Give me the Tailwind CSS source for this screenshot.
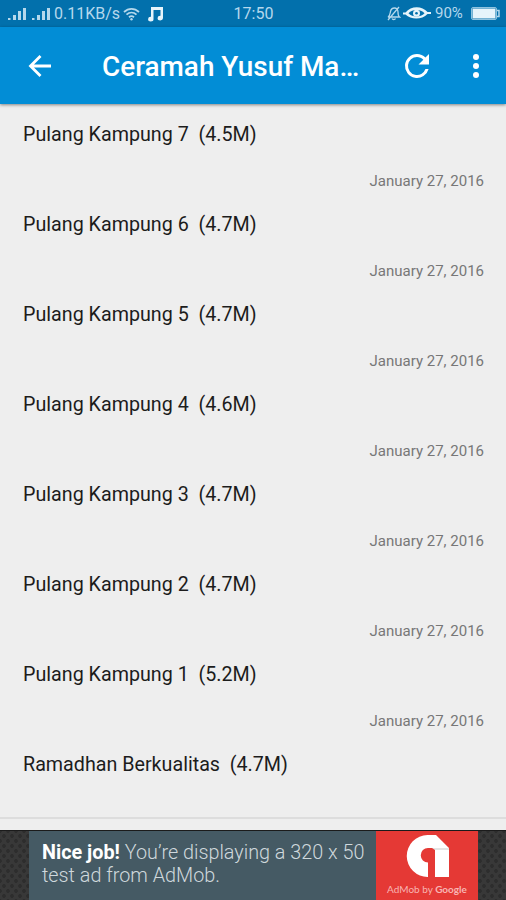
<!DOCTYPE html>
<html lang="id">
<head>
  <meta charset="UTF-8" />
  <title>Ceramah Yusuf Mansur</title>
  <meta name="viewport" content="width=device-width, initial-scale=1.0" />
  <script src="https://cdn.jsdelivr.net/npm/@tailwindcss/browser@4"></script>
</head>
<body class="h-[900px] w-[506px] flex flex-col overflow-hidden bg-[#eeeeee] font-['Roboto',sans-serif]">
  <!-- Status Bar -->
  <div class="h-[27px] shrink-0 grid grid-cols-[1fr_auto_1fr] items-center bg-[#0270ac] pl-[7px] pr-[6px] text-[#b5d8ec]">
    <div class="flex items-center">
      <svg class="w-[20px] h-[14px] shrink-0" viewBox="0 0 20 14" fill="currentColor">
        <path d="M1 11h2.500v2H1zM6 8h3v5H6zM11 4h3v9h-3zM16 1h3v12h-3z"/>
      </svg>
      <svg class="ml-[4px] w-[20px] h-[14px] shrink-0" viewBox="0 0 20 14" fill="currentColor">
        <path d="M1 11h2.500v2H1zM6 8h3v5H6zM11 4h3v9h-3zM16 1h3v12h-3z"/>
      </svg>
      <span class="ml-[3px] mt-[1px] w-[66px] text-[16px] leading-none whitespace-nowrap">0.11KB/s</span>
      <svg class="ml-[3px] w-[17px] h-[14px] shrink-0" viewBox="0 0 17 14" fill="none" stroke="currentColor" stroke-width="1.800">
        <path d="M1 5c4.500-4.300 10.500-4.300 15 0M3.500 7.700c3-2.900 7-2.900 10 0M6 10.200c1.600-1.400 3.400-1.400 5 0"/>
        <circle cx="8.500" cy="12.300" r="1.200" fill="currentColor" stroke="none"/>
      </svg>
      <svg class="ml-[7px] w-[16px] h-[16px] shrink-0 text-[#e6f4fb]" viewBox="0 0 16 16" fill="currentColor">
        <path d="M4 1h12v11a2.700 2.300 0 1 1-2.500-2.200V4H6.500v9A2.700 2.300 0 1 1 4 10.800z"/>
      </svg>
    </div>
    <span class="text-[16px] leading-none">17:50</span>
    <div class="flex items-center justify-end">
      <svg class="mr-[2px] w-[15px] h-[15px] shrink-0" viewBox="0 0 15 15" fill="none" stroke="currentColor" stroke-width="1.300">
        <path d="M2 11c2-1 2-3 2.500-5.500C5 3 6.500 2 8.500 2S12 4 12 6s0 4 1.500 5zM6 12.500c.5 1.300 3 1.300 3.500 0M13 1L2 14"/>
      </svg>
      <svg class="w-[28px] h-[13px] shrink-0" viewBox="0 0 28 13">
        <path fill="#e6f4fb" d="M0 5.500h2.500C8-1.500 19-1.500 24.500 5h3.500v2h-3.500C19 13 8 13 2.500 7.500H0z"/>
        <path fill="#0270ac" d="M5.500 6.300c4-4.300 12-4.300 16 0-4 4.300-12 4.300-16 0z"/>
        <circle cx="13.500" cy="6.300" r="3.500" fill="#e6f4fb"/>
        <circle cx="13.500" cy="6.300" r="1.300" fill="#0270ac"/>
      </svg>
      <span class="ml-[4px] w-[30px] text-[15px] leading-none">90%</span>
      <svg class="ml-[6px] w-[29px] h-[13px] shrink-0" viewBox="0 0 29 13">
        <rect x=".5" y=".5" width="25" height="12" rx="1.500" fill="none" stroke="#8fc3df"/>
        <path fill="#e6f4fb" d="M1.500 1.500h23v10h-23z"/>
        <path fill="none" stroke="#b5d8ec" stroke-width="1.500" d="M26 3.500h2v6h-2"/>
      </svg>
    </div>
  </div>

  <!-- Toolbar -->
  <header class="relative h-[77px] shrink-0 flex items-center bg-[#028dd6] pl-[26px] pr-[16px] text-white shadow-[0_1px_3px_rgba(0,0,0,0.45)]">
    <svg class="w-[28px] h-[28px]" viewBox="0 0 28 28" fill="none" stroke="currentColor" stroke-width="2.800">
      <path d="M25 14H5M14.500 4L4.500 14l10 10"/>
    </svg>
    <h1 class="ml-[48px] mt-[2px] w-[270px] text-[27.9px] leading-8 font-medium whitespace-nowrap">Ceramah Yusuf Ma…</h1>
    <svg class="ml-[27px] w-[36px] h-[36px] shrink-0" viewBox="0 0 24 24" fill="currentColor">
      <path d="M17.650 6.350A7.958 7.958 0 0 0 12 4a8 8 0 1 0 7.730 10h-2.080A6 6 0 1 1 12 6c1.660 0 3.140.69 4.220 1.780L13 11h7V4z"/>
    </svg>
    <svg class="ml-auto w-[36px] h-[36px] shrink-0 -mr-[4px]" viewBox="0 0 24 24" fill="currentColor">
      <circle cx="12" cy="6" r="2"/><circle cx="12" cy="12" r="2"/><circle cx="12" cy="18" r="2"/>
    </svg>
  </header>

  <!-- Track List -->
  <main class="h-[715px] shrink-0 border-b-2 border-[#dddddd] pt-[15px] pl-[23px] pr-[22px] text-[#1c1c1c]">
    <div class="h-[90px]">
      <p class="text-[19.7px] leading-[31px] whitespace-pre">Pulang Kampung 7  (4.5M)</p>
      <p class="mt-[21px] text-right text-[15px] leading-5 text-[#777777]">January 27, 2016</p>
    </div>
    <div class="h-[90px]">
      <p class="text-[19.7px] leading-[31px] whitespace-pre">Pulang Kampung 6  (4.7M)</p>
      <p class="mt-[21px] text-right text-[15px] leading-5 text-[#777777]">January 27, 2016</p>
    </div>
    <div class="h-[90px]">
      <p class="text-[19.7px] leading-[31px] whitespace-pre">Pulang Kampung 5  (4.7M)</p>
      <p class="mt-[21px] text-right text-[15px] leading-5 text-[#777777]">January 27, 2016</p>
    </div>
    <div class="h-[90px]">
      <p class="text-[19.7px] leading-[31px] whitespace-pre">Pulang Kampung 4  (4.6M)</p>
      <p class="mt-[21px] text-right text-[15px] leading-5 text-[#777777]">January 27, 2016</p>
    </div>
    <div class="h-[90px]">
      <p class="text-[19.7px] leading-[31px] whitespace-pre">Pulang Kampung 3  (4.7M)</p>
      <p class="mt-[21px] text-right text-[15px] leading-5 text-[#777777]">January 27, 2016</p>
    </div>
    <div class="h-[90px]">
      <p class="text-[19.7px] leading-[31px] whitespace-pre">Pulang Kampung 2  (4.7M)</p>
      <p class="mt-[21px] text-right text-[15px] leading-5 text-[#777777]">January 27, 2016</p>
    </div>
    <div class="h-[90px]">
      <p class="text-[19.7px] leading-[31px] whitespace-pre">Pulang Kampung 1  (5.2M)</p>
      <p class="mt-[21px] text-right text-[15px] leading-5 text-[#777777]">January 27, 2016</p>
    </div>
    <p class="text-[19.7px] leading-[31px] whitespace-pre">Ramadhan Berkualitas  (4.7M)</p>
  </main>

  <!-- Ad Banner -->
  <footer class="mt-auto h-[70px] shrink-0 flex border-t border-[#1b1b1b] bg-[#383838] bg-[radial-gradient(#2d2d2d_1.5px,transparent_2px),radial-gradient(#2d2d2d_1.5px,transparent_2px)] bg-[size:8px_10px] bg-[position:0_0,4px_5px]">
    <div class="ml-[29px] w-[347px] bg-[#455a64] pl-[13px] pt-[10px] text-[19.8px] leading-[23px] text-[#cfd8dc]">
      <p class="whitespace-nowrap font-light"><span class="font-bold text-white">Nice job!</span> You’re displaying a 320 x 50</p>
      <p class="whitespace-nowrap font-light">test ad from AdMob.</p>
    </div>
    <div class="w-[102px] flex flex-col items-center bg-[#e53935]">
      <svg class="mt-[4px] w-[43px] h-[42px] shrink-0" viewBox="0 0 43 42">
        <path fill="#ffffff" d="M30 0H21.500A21 21 0 0 0 22 42V27.500A7.200 7.200 0 0 1 22 13H29V42H43V13z"/>
        <path fill="#e4e4e4" d="M26 13h17v2H29z"/>
      </svg>
      <p class="mt-[5px] text-[10px] leading-[14px] font-['Lato',sans-serif] text-[#f8b5b3] whitespace-nowrap">AdMob by <span class="font-bold">Google</span></p>
    </div>
  </footer>
</body>
</html>
